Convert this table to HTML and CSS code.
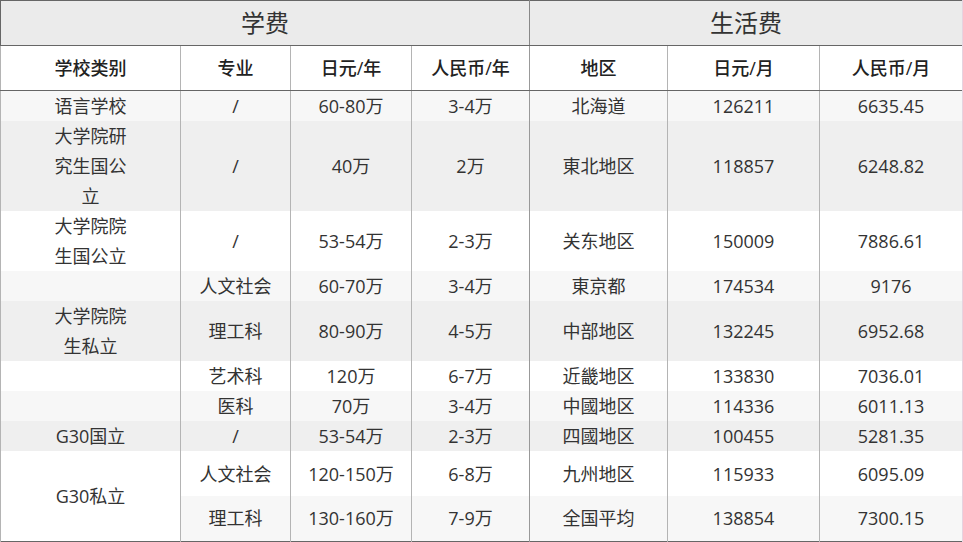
FILE: index.html
```html
<!DOCTYPE html>
<html lang="zh-CN">
<head>
<meta charset="utf-8">
<title>留学费用</title>
<link rel="stylesheet" href="styles.css">
</head>
<body>
<div class="wrap">
<table class="fees">
  <colgroup>
    <col class="c1"><col class="c2"><col class="c3"><col class="c4"><col class="c5"><col class="c6"><col class="c7">
  </colgroup>
  <thead>
    <tr class="h1">
      <th colspan="4" class="mid">学费</th>
      <th colspan="3">生活费</th>
    </tr>
    <tr class="h2">
      <th>学校类别</th><th>专业</th><th>日元/年</th><th class="mid">人民币/年</th>
      <th>地区</th><th>日元/月</th><th>人民币/月</th>
    </tr>
  </thead>
  <tbody>
    <tr class="r30 ba">
      <td>语言学校</td><td>/</td><td>60-80万</td><td class="mid">3-4万</td><td>北海道</td><td>126211</td><td>6635.45</td>
    </tr>
    <tr class="r90 bb">
      <td>大学院研<br>究生国公<br>立</td><td>/</td><td>40万</td><td class="mid">2万</td><td>東北地区</td><td>118857</td><td>6248.82</td>
    </tr>
    <tr class="r60 bc">
      <td>大学院院<br>生国公立</td><td>/</td><td>53-54万</td><td class="mid">2-3万</td><td>关东地区</td><td>150009</td><td>7886.61</td>
    </tr>
    <tr class="r30 ba">
      <td></td><td>人文社会</td><td>60-70万</td><td class="mid">3-4万</td><td>東京都</td><td>174534</td><td>9176</td>
    </tr>
    <tr class="r60 bb">
      <td>大学院院<br>生私立</td><td>理工科</td><td>80-90万</td><td class="mid">4-5万</td><td>中部地区</td><td>132245</td><td>6952.68</td>
    </tr>
    <tr class="r30 bc">
      <td></td><td>艺术科</td><td>120万</td><td class="mid">6-7万</td><td>近畿地区</td><td>133830</td><td>7036.01</td>
    </tr>
    <tr class="r30 ba">
      <td></td><td>医科</td><td>70万</td><td class="mid">3-4万</td><td>中國地区</td><td>114336</td><td>6011.13</td>
    </tr>
    <tr class="r30 bb">
      <td>G30国立</td><td>/</td><td>53-54万</td><td class="mid">2-3万</td><td>四國地区</td><td>100455</td><td>5281.35</td>
    </tr>
    <tr class="r45 bc">
      <td rowspan="2" class="bc">G30私立</td><td>人文社会</td><td>120-150万</td><td class="mid">6-8万</td><td>九州地区</td><td>115933</td><td>6095.09</td>
    </tr>
    <tr class="r45 ba">
      <td>理工科</td><td>130-160万</td><td class="mid">7-9万</td><td>全国平均</td><td>138854</td><td>7300.15</td>
    </tr>
  </tbody>
</table>
</div>
</body>
</html>
```

FILE: styles.css
```css
html, body {
  margin: 0;
  padding: 0;
  background: #ffffff;
}

.wrap {
  width: 963px;
  height: 542px;
  overflow: hidden;
  border-right: 1px solid #e6d3e0;
  box-sizing: border-box;
}

.fees {
  width: 962px;
  table-layout: fixed;
  border-collapse: collapse;
  font-family: "Open Sans", "Noto Sans CJK SC", sans-serif;
  font-size: 18px;
  color: #333333;
  border-top: 1px solid #666666;
  border-left: 1px solid #666666;
  border-bottom: 1px solid #666666;
  border-right: 1px solid #8f7888;
}

.c1 { width: 180px; }
.c2 { width: 110px; }
.c3 { width: 121px; }
.c4 { width: 118px; }
.c5 { width: 138px; }
.c6 { width: 152px; }
.c7 { width: 143px; }

.fees th,
.fees td {
  padding: 0;
  text-align: center;
  vertical-align: middle;
  line-height: 30px;
  border-left: 1px solid #b4b4b4;
  white-space: nowrap;
}

.fees th.mid,
.fees td.mid {
  border-right: 1px solid #999999;
}

.h1 {
  height: 45px;
  background: #ebebeb;
}

.h1 th {
  font-size: 24px;
  font-weight: 400;
  color: #333333;
  border-bottom: 1px solid #666666;
  border-left: none;
}

.h1 th.mid {
  border-right: 1px solid #888888;
}

.h2 {
  height: 45px;
  background: #ffffff;
}

.h2 th {
  font-weight: 500;
  color: #222222;
  border-bottom: 1px solid #666666;
}

.r30 { height: 30px; }
.r45 { height: 45px; }
.r60 { height: 60px; }
.r90 { height: 90px; }

.ba { background: #f7f7f7; }
.bb { background: #efefef; }
.bc { background: #ffffff; }
```
